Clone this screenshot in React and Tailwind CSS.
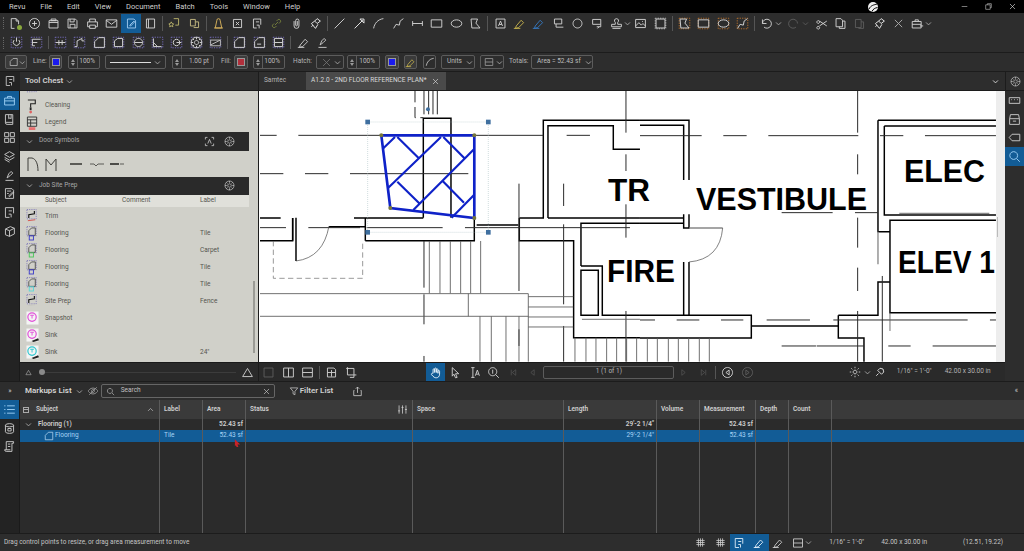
import React from "react";

const font = { fontFamily: "Roboto, 'Liberation Sans', sans-serif" };

// 16x16 toolbar glyphs
const P = {
  newDoc: "M4 2h6l3 3v4 M4 2v12h4 M10 2v3h3",
  plusCircle: "M8 1.8a6.2 6.2 0 1 0 .01 0z M8 5v6 M5 8h6",
  folder: "M2.5 4.5h11v9h-11z M2.5 6.8h11 M5 2.5h6v2H5z",
  save: "M2.5 2.5h9l2 2v9h-11z M5 2.5v3.5h5v-3.5 M5 13.5v-4.5h6v4.5",
  print: "M4.5 6V2.5h7V6 M2 6h12v6h-2.5 M4.5 12H2V6 M4.5 10h7v4h-7z",
  mail: "M1.5 3.5h13v9h-13z M1.5 4l6.5 5 6.5-5",
  markup: "M3 2.5h8l2 2v9H3z M6 10l5-5 1 1-5 5H6z",
  panel: "M3 2.5h10v11H3z M5.5 2.5v11",
  docStar: "M7 2h6v8H9 M3 8l1-2 1 2 2 .5-1.5 1.5.5 2-2-1-2 1 .5-2L1 8.5z",
  docStar2: "M3 3h6v8H3z M9 6h4v7H7",
  bell: "M4 13.5 6 4a2 2 0 0 1 4 0l2 9.500z M2.500 13.500h11",
  snap: "M3 3h10v10H3z M6 6l4 4 M10 6 6 10",
  docArrow: "M3 2.500h9v7 M3 2.500v11h4 M10 14v-4h-3 M6 6h4",
  link: "M6 10l4-4 M5 8l-2 2a2.400 2.400 0 0 0 3 3l2-2 M8 5l2-2a2.400 2.400 0 0 1 3 3l-2 2",
  clip: "M5 5v6a3 3 0 0 0 6 0V4.500a2 2 0 0 0-4 0V10a1 1 0 0 0 2 0V5",
  brush: "M10 2l4 3-4 3-3-3z M7 5 3 8l5 6 3-5 M5 10l-2 2",
  line: "M2 14 14 2",
  arrow: "M2 14 12 4 M8.500 2.500H13.500V7.500z",
  arc: "M2 14C3 8 7 3 14 2",
  poly: "M2 14l3-5 4 1 1-5 4-3",
  measure: "M2 8h12 M2 5v6 M14 5v6",
  rect: "M1.500 3.500h13v9h-13z",
  ellipse: "M8 3.500c3.600 0 6.500 2 6.500 4.500S11.600 12.500 8 12.500 1.500 10.500 1.500 8 4.400 3.500 8 3.500z",
  polygon: "M2.500 2.500h8l-2 5 5 6h-10z",
  text: "M2.500 2.500h11v11h-11z M5.500 11 8 5l2.500 6 M6.500 9.200h3",
  hl: "M3 14l1-3 6-7 3 3-6 6z M1 14h8",
  callout: "M3 2.500h9v6H3z M5 8.500v4h9 ",
  cloud: "M8 2.500a5.500 5.500 0 1 0 .01 0z",
  calloutArr: "M2 3h10v6H2z M12 9v3h-5 M10 12l-2 2",
  stamp: "M8 2a2.500 2.500 0 0 1 1.500 4.500V9H14v3H2V9h4.500V6.500A2.500 2.500 0 0 1 8 2z M3 14h10",
  image: "M2 3h12v10H2z M2 11l4-4 3 3 2-2 3 3 M10 5.500h1",
  undo: "M3 8a5.500 5.500 0 1 1 2 4.500 M3 3v5h5",
  redo: "M13 8a5.500 5.500 0 1 0-2 4.500",
  scissors: "M4 4.500a1.700 1.700 0 1 0 .01 0z M4 11.500a1.700 1.700 0 1 0 .01 0z M5.500 5l9 6 M5.500 11l9-6",
  copy: "M2.500 2h6l2 2v8h-8z M10.500 5h3v9h-7v-2",
  paste: "M3 3h7v10H3z M10 6h3v8H7v-1",
  close: "M3.500 3.500l9 9 M12.500 3.500l-9 9",
  toolbox: "M1.500 5.500h11v8h-11z M5 5.500v-2h4v2 M1.500 9h11 M11 11h4",
  hand: "M5 9V4.500a1 1 0 0 1 2 0V8V3.500a1 1 0 0 1 2 0V8V4.500a1 1 0 0 1 2 0V9V6.500a1 1 0 0 1 2 0V10c0 3-2 4.500-4 4.500S6 14 3 10.500c-.5-1 1-2 2-1.500z",
  cursor: "M4 2l8 7.500H8l2 4.500-2 .5-2-4.500-2 2.500z",
  textSel: "M4 2h4 M6 2v12 M4 14h4 M9 12l2.500-7 2.500 7 M10 10h3",
  zoom: "M7 2a5 5 0 1 0 .01 0z M10.500 10.500l4 4 M7 4.500v5",
  first: "M4 3v10 M12 3 6 8l6 5z",
  prev: "M11 3 5 8l6 5z",
  next: "M5 3l6 5-6 5z",
  last: "M12 3v10 M4 3l6 5-6 5z",
  back: "M8 1.800a6.200 6.200 0 1 0 .01 0z M10 5 6 8l4 3z",
  forward: "M8 1.800a6.200 6.200 0 1 0 .01 0z M6 5l4 3-4 3z",
  split1: "M2 2.500h12v11H2z M8 2.500v11",
  split2: "M2 2.500h12v11H2z M2 8h12",
  single: "M2.500 2.500h11v11h-11z",
  compare: "M3 2.500h8l2 2v9H3z M3 8h10 M8 5v8",
  overlay: "M3 3h8v8H3z M3 1.500v3 M1.500 3h3 M11 11v3 M14 11h-3 M6 14h5",
  sun: "M8 5.500a2.500 2.500 0 1 0 .01 0z M8 1v2 M8 13v2 M1 8h2 M13 8h2 M3 3l1.500 1.500 M11.500 11.500 13 13 M13 3l-1.500 1.500 M4.500 11.500 3 13",
  calib: "M3 13l3-3 M5 6l5 5 3-3-1-4-4-1z",
  search: "M7 2.500a4.500 4.500 0 1 0 .01 0z M10.500 10.500l4 4",
  filter: "M2 3h12L9.500 8.500V14l-3-1.500v-4z",
  share: "M3.500 6.500h-1v7.500h11V6.500h-1 M8 10V1.500 M5.500 4 8 1.500 10.500 4",
  eyeOff: "M1.500 8S4 4 8 4s6.500 4 6.500 4-2.500 4-6.500 4-6.500-4-6.500-4z M3 13 13 3 M8 6a2 2 0 1 0 .01 0z",
  toolChest: "M2 5h12v8.500H2z M5.500 5V3h5v2 M2 8.500h12",
  book: "M3 2h9v12H5a2 2 0 0 1-2-2z M3 11.500h9 M7 2v5l1.500-1L10 7V2",
  grid: "M2 2h5v5H2z M9 2h5v5H9z M2 9h5v5H2z M9 9h5v5H9z",
  layers: "M8 2l6 3.500L8 9 2 5.500z M2 9l6 3.500L14 9 M2 11.500 8 15",
  stampPen: "M3 14h10 M5 11l2-5 3-3 2 2-3 3-4 3z",
  markups: "M3 2h8l2 2v10H3z M5 5h5 M5 8h2 M7 11l5-5 1 1-5 5z",
  docLink: "M3 2h10v7 M3 2v12h5 M7 6h4 M10 14v-4H7",
  cube: "M3 5l6-3 5 2v7l-6 3-5-2z M3 5l5 2 6-3 M8 7v7",
  gear: "M8 5.500a2.500 2.500 0 1 0 .01 0z M8 1.500a6.500 6.500 0 1 0 .01 0z M8 1.500v2.500 M8 12v2.500 M1.500 8H4 M12 8h2.500 M3.500 3.500l1.500 1.500 M11 11l1.500 1.500 M12.500 3.500 11 5 M5 11l-1.500 1.500",
  list: "M5 3.500h9.500 M5 8h9.500 M5 12.500h9.500 M1.500 3.500h1.500 M1.500 8h1.500 M1.500 12.500h1.500",
  sliders: "M3 2v12 M8 2v12 M13 2v12 M1.500 10h3 M6.500 5h3 M11.500 8h3",
  docCube: "M3 4a5 2 0 0 1 10 0v8a5 2 0 0 1-10 0z M3 4a5 2 0 0 0 10 0 M6 8h4v3H6z",
  scroll: "M4 2h9v2H11v10H4a2 2 0 0 1-2-2h7 M4 12V2 M6 5h3 M6 8h3",
  keyboard: "M1.500 4.500h13v7h-13z M4 7h1 M7.500 7h1 M11 7h1",
  drawer: "M2 7l1-5h10l1 5v7H2z M2 7h12 M6 10h4",
  tag: "M14.500 4v8H5L1.500 8 5 4z",
  magnifier: "M7 2a4.800 4.800 0 1 0 .01 0z M10.500 10.500l4 4",
  grid2: "M2 5h12 M2 8h12 M2 11h12 M5 2v12 M8 2v12 M11 2v12",
  flooring: "M2 14V7l5-5h7v12z",
};

function Ic({ d, c = "#d2d2d2", size = 13, sw = 1.15, dim = false }) {
  return (
    <svg viewBox="0 0 16 16" width={size} height={size} fill="none" stroke={dim ? "#5c5c5c" : c} strokeWidth={sw}>
      <path d={d} />
    </svg>
  );
}

function Chev({ c = "#a8a8a8", size = 7 }) {
  return (
    <svg viewBox="0 0 10 10" width={size} height={size} fill="none" stroke={c} strokeWidth="1.3">
      <path d="M1.500 3.500 5 7l3.500-3.500" />
    </svg>
  );
}

// measurement style tool: dotted corners round a shape
function Dotted({ d, c = "#7a72c8", s = "#d2d2d2" }) {
  return (
    <svg viewBox="0 0 16 16" width="13" height="13" fill="none">
      <rect x="1.500" y="1.500" width="13" height="13" stroke={c} strokeWidth="1.100" strokeDasharray="1.500 1.500" />
      <path d={d} stroke={s} strokeWidth="1.200" />
    </svg>
  );
}

function Slot({ children, active }) {
  return (
    <div className={`w-[19.4px] h-[19px] flex items-center justify-center shrink-0 ${active ? "bg-[#125c96]" : ""}`}>
      {children}
    </div>
  );
}

function Sep({ tall }) {
  return (
    <div className="w-[5px] flex justify-center shrink-0">
      <div className={`w-px bg-[#555] ${tall ? "h-[15px]" : "h-[13px]"}`} />
    </div>
  );
}

function Grip() {
  return <div className="h-[12px] w-px border-l border-dotted border-[#666] shrink-0" />;
}

const O = "#c5762c";

function Toolbar1() {
  const a = [
    { d: P.newDoc, dot: true }, { d: P.plusCircle }, { d: P.folder }, { d: P.save }, { d: P.print }, { d: P.mail },
    { d: P.markup, active: true, c: "#9cc8ee" }, { d: P.panel }, "|",
    { d: P.docStar, c: "#b9b26a" }, { d: P.docStar2, c: "#c4b982" }, "|",
    { d: P.bell, c: "#d8b35c" }, { d: P.snap }, { d: P.docArrow }, { d: P.link, c: "#76803c" }, { d: P.clip }, { d: P.brush, c: "#eeeeee" }, "|",
    { d: P.line }, { d: P.arrow, c: "#eeeeee" }, { d: P.arc }, { d: P.poly }, { d: P.measure }, { d: P.rect }, { d: P.ellipse }, { d: P.polygon }, "|",
    { d: P.text }, { d: P.hl, c: "#c4b04c" }, { d: P.hl, c: "#3478c0" }, { d: P.callout }, { d: P.cloud }, { d: P.calloutArr },
  ];
  const b = [
    { d: P.image }, { dotted: P.single }, "|",
    { d: P.polygon, o: true }, { d: P.rect, o: true }, { d: P.ellipse, o: true }, { d: P.poly, o: true }, "|",
  ];
  const c = [
    { d: P.scissors }, { d: P.copy }, { d: P.paste, dim: true }, { d: P.brush, c: "#eeeeee" }, { d: P.close, c: "#aaaaaa" },
  ];
  const render = (it, i) => {
    if (it === "|") return <Sep key={i} tall />;
    return (
      <Slot key={i} active={it.active}>
        {it.o ? (
          <Dotted d={it.d} c={O} />
        ) : it.dotted ? (
          <Dotted d={it.dotted} c="#c9c9c9" />
        ) : (
          <div className="relative flex">
            <Ic d={it.d} c={it.c} dim={it.dim} />
            {it.dot && <div className="absolute right-[-1px] bottom-0 w-[5px] h-[5px] rounded-full bg-[#8aa83c]" />}
          </div>
        )}
      </Slot>
    );
  };
  return (
    <div className="h-[20px] pl-[3px] flex items-center">
      <Grip />
      <div className="w-px shrink-0" />
      {a.map(render)}
      <div className="w-[24.4px] flex items-center shrink-0 pl-[3px] gap-px">
        <Ic d={P.stamp} />
        <Chev />
      </div>
      {b.map(render)}
      <div className="w-[27px] flex items-center shrink-0 pl-[3px] gap-[2px]">
        <Ic d={P.undo} />
        <Chev />
      </div>
      <div className="w-[27px] flex items-center shrink-0 pl-[3px] gap-[2px]">
        <Ic d={P.redo} dim />
        <Chev c="#5c5c5c" />
      </div>
      {c.map(render)}
      <div className="flex items-center shrink-0 pl-[3px] gap-px">
        <Ic d={P.toolbox} />
        <Chev />
      </div>
    </div>
  );
}

function Toolbar2() {
  const a = [
    { d: "M5 5a4 4 0 1 0 6 0 M8 2v5" }, { d: "M3 4h10 M3 8h6 M3 12h3 M3 4v8" }, "|",
    { d: "M2 8h12 M6 5v6 M10 5v6" }, { d: "M2 13h3V6l6-3v3 h3" }, { d: P.flooring }, { d: "M3 13V6l4-3h6v10z" },
    { d: "M8 3a5 5 0 1 0 .01 0z M3 8h10" }, { d: "M3 3v10h10 M3 8l5 5" }, { d: "M8 4a4 4 0 1 0 .01 0z M8 8h6" }, { d: P.gear }, { d: "M2 11 14 5 M2 5h12v7H2z", s: "#bbbbbb" }, "|",
    { d: P.flooring }, { d: "M2 14V7l5-5h7v12z M5 10h5" }, { d: "M3 3h10v10H3z M3 8h10" }, "|",
  ];
  return (
    <div className="h-[19px] pl-[3px] flex items-center">
      <Grip />
      <div className="w-[3px] shrink-0" />
      {a.map((it, i) =>
        it === "|" ? (
          <Sep key={i} />
        ) : (
          <Slot key={i}>
            <Dotted d={it.d} s={it.s} />
          </Slot>
        )
      )}
      <Slot><Ic d={P.hl} c="#c9c9c9" /></Slot>
      <Slot><Ic d={P.stampPen} c="#c9c9c9" /></Slot>
    </div>
  );
}

function Box({ className = "", children }) {
  return (
    <div className={`h-[14px] border border-[#5c5c5c] rounded-[2px] flex items-center shrink-0 text-[#bdbdbd] ${className}`}>
      {children}
    </div>
  );
}

function Spinner({ className, value }) {
  return (
    <Box className={className}>
      <div className="w-[9px] h-full border-r border-[#5c5c5c] flex flex-col items-center justify-center gap-px">
        <div className="w-0 h-0 border-x-[2.500px] border-x-transparent border-b-[3px] border-b-[#9a9a9a]" />
        <div className="w-0 h-0 border-x-[2.500px] border-x-transparent border-t-[3px] border-t-[#9a9a9a]" />
      </div>
      <span className="flex-1 text-right pr-[4px]">{value}</span>
    </Box>
  );
}

function Swatch({ inner, className = "" }) {
  return (
    <Box className={`justify-center bg-[#3c3c3c] ${className}`}>
      <div className={`w-[8px] h-[8px] border border-[#999] ${inner}`} />
    </Box>
  );
}

function Toolbar3() {
  return (
    <div className="h-[20px] border-y border-[#1c1c1c] flex items-center pl-[5px] text-[6.500px]">
      <Box className="w-[22px] pl-[3px] gap-px bg-[#3a3a3a]">
        <Ic d={P.flooring} size={10} />
        <Chev />
      </Box>
      <span className="ml-[6px] w-[16px] text-[#b5b5b5]">Line:</span>
      <Swatch inner="bg-[#1a1aee]" className="w-[13px]" />
      <Spinner className="w-[32px] ml-[6px]" value="100%" />
      <Box className="w-[61px] ml-[5px] px-[4px] gap-[3px]">
        <div className="flex-1 h-px bg-[#ddd]" />
        <Chev />
      </Box>
      <Spinner className="w-[42px] ml-[6px]" value="1.00 pt" />
      <span className="ml-[7px] w-[13px] text-[#b5b5b5]">Fill:</span>
      <Swatch inner="bg-[#b2303c]" className="w-[14px]" />
      <Spinner className="w-[32px] ml-[5px]" value="100%" />
      <span className="ml-[8px] w-[23px] text-[#b5b5b5]">Hatch:</span>
      <Box className="w-[28px] pl-[4px] gap-[2px]">
        <Ic d="M3 3l10 10 M13 3 3 13" c="#777" size={11} />
        <Chev />
      </Box>
      <Spinner className="w-[33px] ml-[3px]" value="100%" />
      <Swatch inner="bg-[#1a1aee]" className="w-[14px] ml-[5px]" />
      <Box className="w-[13px] ml-[5px] justify-center bg-[#3a3a3a]">
        <Ic d={P.hl} c="#c4b04c" size={11} />
      </Box>
      <Box className="w-[13px] ml-[6px] justify-center">
        <Ic d={P.arc} c="#ddd" size={10} />
      </Box>
      <Box className="w-[34px] ml-[5px] pl-[5px] gap-[4px]">
        <span>Units</span>
        <Chev />
      </Box>
      <Box className="w-[24px] ml-[5px] pl-[3px] gap-[2px]">
        <Ic d={P.split2} size={10} c="#aaa" />
        <Chev />
      </Box>
      <span className="ml-[5px] w-[22px] text-[#b5b5b5]">Totals:</span>
      <Box className="w-[62px] pl-[5px] gap-[4px] whitespace-nowrap">
        <span>Area = 52.43 sf</span>
        <Chev />
      </Box>
    </div>
  );
}

function RailBtn({ d, active }) {
  return (
    <div className={`h-[18.700px] flex items-center justify-center ${active ? "bg-[#125c96]" : ""}`}>
      <Ic d={d} c={active ? "#9cd0f5" : "#c9c9c9"} size={13} />
    </div>
  );
}

function LeftRail() {
  return (
    <div className="w-[20px] shrink-0 bg-[#232323] border-r border-[#1a1a1a]">
      {[P.toolChest, P.book, P.grid, P.layers, P.stampPen, P.markups, P.docLink, P.cube].map((d, i) => (
        <RailBtn key={i} d={d} active={i === 0} />
      ))}
    </div>
  );
}

function RightRail() {
  return (
    <div className="w-[19px] shrink-0 bg-[#2d2d2d]">
      {[P.keyboard, P.drawer, P.tag, P.magnifier].map((d, i) => (
        <RailBtn key={i} d={d} active={i === 3} />
      ))}
    </div>
  );
}

function FloorIcon({ c }) {
  return (
    <svg viewBox="0 0 14 16" width="13" height="15" fill="none">
      <rect x="1" y="0.500" width="10" height="10" stroke="#7a72b8" strokeWidth="0.900" strokeDasharray="1.200 1.200" />
      <path d="M3 10V5l3-3h4v8z" stroke="#444" strokeWidth="0.900" />
      <rect x="3.500" y="10.500" width="4.500" height="4.500" stroke={c} strokeWidth="1" />
    </svg>
  );
}

function TrimIcon({ c }) {
  return (
    <svg viewBox="0 0 14 16" width="13" height="15" fill="none">
      <rect x="1" y="0.500" width="10" height="10" stroke="#7a72b8" strokeWidth="0.900" strokeDasharray="1.200 1.200" />
      <path d="M3 9.500 3 6 9 5 9 2" stroke="#111" strokeWidth="1.200" />
      <path d="M2 12.500 10 11.500" stroke={c} strokeWidth="1" />
    </svg>
  );
}

function RoundIcon({ c, extra }) {
  return (
    <svg viewBox="0 0 14 16" width="13" height="15" fill="none">
      <rect x="0.500" y="0.500" width="13" height="14" fill="#f4f4f4" />
      <circle cx="6.500" cy="6.500" r="4.500" stroke={c} strokeWidth="1.300" />
      <path d="M4.500 4.500h4 M6.500 4.500v3.500" stroke={c} strokeWidth="1" />
      {extra && <path d="M6 14l7-3 1 2-6 2z" fill="#222" />}
    </svg>
  );
}

const chestRows = [
  { name: "Trim", icon: <TrimIcon c="#d8504a" /> },
  { name: "Flooring", label: "Tile", icon: <FloorIcon c="#3b3bc8" /> },
  { name: "Flooring", label: "Carpet", icon: <FloorIcon c="#4ac85a" /> },
  { name: "Flooring", label: "Tile", icon: <FloorIcon c="#3b3bc8" /> },
  { name: "Flooring", label: "Tile", icon: <FloorIcon c="#5ad8d8" /> },
  { name: "Site Prep", label: "Fence", icon: <TrimIcon c="#c8c8c0" /> },
  { name: "Snapshot", icon: <RoundIcon c="#e050d8" /> },
  { name: "Sink", icon: <RoundIcon c="#e050d8" extra /> },
  { name: "Sink", label: "24\"", icon: <RoundIcon c="#30c8d0" extra /> },
];

function ChestRow({ icon, name, comment, label }) {
  return (
    <div className="h-[17px] grid grid-cols-[25px_77px_78px_1fr] items-center text-[6.500px] text-[#55554f]">
      <div className="pl-[6px] flex">{icon}</div>
      <span>{name}</span>
      <span>{comment}</span>
      <span>{label}</span>
    </div>
  );
}

function ChestHeader({ title, tall, children }) {
  return (
    <div className={`flex items-center bg-[#2a2a2a] text-[#a8a8a8] text-[6.500px] pl-[6px] pr-[14px] ${tall ? "h-[19px]" : "h-[18px]"}`}>
      <Chev size={7} />
      <span className="ml-[6px] flex-1">{title}</span>
      {children}
    </div>
  );
}

function ToolChest() {
  return (
    <div className="w-[238px] shrink-0 flex flex-col">
      <div className="flex-1 flex overflow-hidden bg-[#d0d0c9]">
        <div className="w-[229px] -mt-[10.500px]">
          <ChestRow name="" label="connection" icon={<TrimIcon c="#d0d0c9" />} />
          <ChestRow
            name="Cleaning"
            icon={<svg viewBox="0 0 14 16" width="13" height="15" fill="none"><path d="M2 1h8v4H5v4" stroke="#222" strokeWidth="1.200" /><path d="M5 9v3" stroke="#222" strokeWidth="2" /><circle cx="5" cy="14" r="1.500" fill="#e06060" /></svg>}
          />
          <ChestRow
            name="Legend"
            icon={<svg viewBox="0 0 14 16" width="13" height="15" fill="none"><path d="M1.500 1h10v10h-10z M1.500 4h10 M1.500 7.500h10 M5 4v7" stroke="#333" strokeWidth="1" /><rect x="3" y="12" width="7" height="3" fill="#e87070" /></svg>}
          />
          <ChestHeader title="Door Symbols" tall>
            <div className="mr-[9px]"><Ic d="M2 5V2h3 M11 2h3v3 M14 11v3h-3 M5 14H2v-3 M5.500 11 8 5l2.500 6" c="#d0d0d0" size={11} /></div>
            <Ic d={P.gear} c="#d0d0d0" size={11} sw={1} />
          </ChestHeader>
          <div className="h-[26px] flex items-center pl-[6px]">
            <svg viewBox="0 0 110 16" width="110" height="16" fill="none" stroke="#3e3e3a">
              <path d="M2 15V2H6C10 3 12 8 12 15" strokeWidth="1" />
              <path d="M20 15V3L25 9 30 3V15" strokeWidth="1" />
              <path d="M44 8h12" strokeWidth="1.600" />
              <path d="M64 8h4l2 2 2-2h6" strokeWidth="0.800" />
              <path d="M84 8h9" strokeWidth="1.800" />
              <path d="M94 8h4" strokeWidth="0.800" />
            </svg>
          </div>
          <ChestHeader title="Job Site Prep">
            <Ic d={P.gear} c="#d0d0d0" size={11} sw={1} />
          </ChestHeader>
          <div className="h-[12px] grid grid-cols-[25px_77px_78px_1fr] items-center text-[6.500px] text-[#55554f] bg-[#e0e0da]">
            <span />
            <span>Subject</span>
            <span>Comment</span>
            <span>Label</span>
          </div>
          <div className="pt-[1.500px]">
            {chestRows.map((r, i) => (
              <ChestRow key={i} {...r} />
            ))}
          </div>
        </div>
        <div className="flex-1 pt-[190px] pl-[4px]">
          <div className="w-[2px] h-[72px] bg-[#9a9a94]" />
        </div>
      </div>
      <div className="h-[19px] bg-[#2a2a2a] flex items-center pl-[5px] pr-[4px] border-t border-[#1a1a1a]">
        <Ic d="M8 3 14 13H2z" c="#c9c9c9" size={7} />
        <div className="ml-[7px] w-[6px] h-[6px] rounded-full bg-[#8a8a8a] shrink-0" />
        <div className="flex-1 h-px bg-[#3c3c3c]" />
        <div className="ml-[5px]"><Ic d="M8 3 14 13H2z" c="#c9c9c9" size={13} /></div>
      </div>
    </div>
  );
}

function Plan() {
  const m = "#000";
  return (
    <svg viewBox="259 90 737 271" className="flex-1 min-w-0 h-full bg-white" fill="none">
      <g transform="translate(260 90) scale(0.3333)" stroke={m}>
        <g strokeWidth="4.400">
          <path d="M490 380V82H573V380" />
          <path d="M0 381H62 M282 381H316 M0 449H98V381 M316 449V381H490 M316 449H643V381" />
          <path d="M778 381V449H941V740H1140 M778 381H850V88H1140 M864 381V104H1060V175H1140 M864 381H1140" />
          <path d="M963 525V397H1140 M963 525H1027V673H1140 M963 538H1015V673H963z" />
          <path d="M108 380V510 M98 381V449" />
          <path d="M207 407H316 M650 402H775" />
        </g>
        <g strokeWidth="3" stroke="#2a2a2a">
          <path d="M0 133H50 M115 133H365 M643 133H850 M920 133H990 M0 248H70 M135 248H205 M270 248H625" />
          <path d="M0 410H78 M145 410H300 M320 410H548 M615 410H1110" />
          <path d="M492 0V70 M492 450V590 M492 610V700 M492 795V812 M506 0V70 M519 0V70 M532 0V70" />
          <path d="M465 0V80H490" strokeDasharray="34 14" />
          <path d="M1098 0V125 M1098 190V240 M1098 340V440 M1098 660V812" />
          <path d="M777 278V600 M777 715V765 M911 278V345 M911 400V640 M911 705V812" />
        </g>
        <g strokeWidth="2.600" stroke="#5a5a5a">
          <path d="M508 450V607 M540 450V607 M571 450V607 M602 450V607 M632 450V607 M662 450V607" />
          <path d="M0 608H805 M0 676H805 M625 608V676 M805 608V812 M805 617H940 M805 648H940 M805 678H940 M805 708H940" />
          <path d="M660 676V812 M694 676V812 M738 676V812 M777 676V812" />
          <path d="M945 740V812 M978 740V812 M1008 740V812 M1040 740V812 M1070 740V812 M1100 740V812 M1130 740V812" />
          <path d="M966 685H1140" />
        </g>
        <path d="M108 510Q190 500 207 405" stroke="#444" strokeWidth="2" />
        <path d="M40 450V562H308V450" stroke="#666" strokeWidth="2" strokeDasharray="16 10" />

        <rect x="323" y="93" width="362" height="331" stroke="#9ab4b8" strokeWidth="2" strokeDasharray="2 4" />
        <path d="M364 133H643V381L391 351z" stroke="#0f22c8" strokeWidth="8" />
        <path
          d="M370 172 405 138 M412 138 475 200 M385 290 543 138 M550 138 612 200 M460 357 642 175 M412 272 477 336 M548 270 612 335 M575 380 642 312"
          stroke="#0f22c8"
          strokeWidth="6.500"
        />
        <g fill="#3f6f9f" stroke="none">
          <rect x="316" y="86" width="14" height="14" />
          <rect x="678" y="86" width="14" height="14" />
          <rect x="316" y="417" width="14" height="14" />
          <rect x="678" y="417" width="14" height="14" />
          <circle cx="504" cy="55" r="6" />
        </g>
        <g fill="#77773a" stroke="none">
          <circle cx="364" cy="133" r="6" />
          <circle cx="643" cy="133" r="6" />
          <circle cx="643" cy="381" r="6" />
          <circle cx="391" cy="351" r="6" />
        </g>
      </g>
      <g transform="translate(640 90) scale(0.3333)" stroke={m}>
        <g strokeWidth="4.400">
          <path d="M0 88H147V267 M0 103H131V267 M0 381H131 M0 397H131 M131 370V411H147V370" />
          <path d="M131 513V673 M147 513V673 M0 673H334V741H0 M334 705H595 M595 673V741H672V812 M595 673H714V573H750" />
          <path d="M714 88V422H750V388H1068 M714 88H1068 M733 105V372H1068 M733 105H1068 M750 388V665H1068" />
        </g>
        <g strokeWidth="3" stroke="#2a2a2a">
          <path d="M0 134H185 M250 134H320 M385 134H655 M720 134H790 M855 134H1068" />
          <path d="M653 0V125 M653 190V250 M653 380V470 M653 530V600 M653 660V812 M727 555V812" />
          <path d="M425 365H578 M645 365H714 M0 687H45 M110 687H178 M243 687H310 M380 687H510 M580 687H983 M1050 687H1068" />
          <path d="M425 765H528 M530 765H672 M745 765H812 M878 765H1068" />
        </g>
        <path d="M148 411H248 M778 367H1048 M714 422V520" stroke="#888" strokeWidth="4" />
        <path d="M248 411Q240 505 147 513" stroke="#444" strokeWidth="2" />
        <path d="M750 665V720 M22 741V812 M52 741V812 M85 741V812 M115 741V812 M146 741V812 M178 741V812 M208 741V812" stroke="#5a5a5a" strokeWidth="2.600" />
      </g>
      <g fill="#000" fontWeight="700" fontSize="31" style={{ fontFamily: "'Liberation Sans', Arial, sans-serif" }}>
        <text x="608" y="200" textLength="42" lengthAdjust="spacingAndGlyphs">TR</text>
        <text x="696" y="209" textLength="171" lengthAdjust="spacingAndGlyphs">VESTIBULE</text>
        <text x="904" y="181" textLength="81" lengthAdjust="spacingAndGlyphs">ELEC</text>
        <text x="607" y="281" textLength="68" lengthAdjust="spacingAndGlyphs">FIRE</text>
        <text x="898" y="272" textLength="97" lengthAdjust="spacingAndGlyphs">ELEV 1</text>
      </g>
    </svg>
  );
}

function BarIcon({ d, active, dim, size = 13 }) {
  return (
    <div className={`w-[19.400px] h-full flex items-center justify-center shrink-0 ${active ? "bg-[#125c96]" : ""}`}>
      <Ic d={d} dim={dim} c={active ? "#e6f2fb" : "#cfcfcf"} size={size} />
    </div>
  );
}

function CanvasBar() {
  return (
    <div className="h-[19px] bg-[#2a2a2a] flex items-center text-[6.500px] text-[#b5b5b5] border-t border-[#1a1a1a]">
      <BarIcon d={P.single} dim />
      <BarIcon d={P.split1} />
      <BarIcon d={P.split2} />
      <Sep />
      <BarIcon d={P.compare} />
      <BarIcon d={P.overlay} />
      <div className="w-[65px] shrink-0" />
      <BarIcon d={P.hand} active />
      <BarIcon d={P.cursor} />
      <BarIcon d={P.textSel} />
      <BarIcon d={P.zoom} />
      <BarIcon d={P.first} dim size={9} />
      <BarIcon d={P.prev} dim size={9} />
      <div className="w-[131px] h-[13px] ml-px border border-[#5c5c5c] rounded-[2px] flex items-center justify-center shrink-0">
        1 (1 of 1)
      </div>
      <BarIcon d={P.next} dim size={9} />
      <BarIcon d={P.last} dim size={9} />
      <Sep />
      <BarIcon d={P.back} />
      <BarIcon d={P.forward} dim />
      <div className="w-[92px] shrink-0" />
      <Ic d={P.sun} c="#cfcfcf" size={12} />
      <div className="ml-[3px]"><Chev /></div>
      <div className="ml-[3px]"><Ic d={P.calib} c="#eeeeee" size={12} /></div>
      <span className="ml-[11px] whitespace-nowrap">1/16" = 1'-0"</span>
      <span className="ml-[13px] whitespace-nowrap">42.00 x 30.00 in</span>
    </div>
  );
}

const colClass =
  "grid grid-cols-[140px_43px_43px_167px_151px_93px_43px_56px_33px_43px_1fr]";

function Cell({ children, className = "", last }) {
  return (
    <div className={`flex items-center px-[4px] whitespace-nowrap ${last ? "" : "border-r border-[#5a5a5a]"} ${className}`}>
      {children}
    </div>
  );
}

function MarkupsHeader() {
  return (
    <div className="h-[19px] flex items-center border-t border-[#1c1c1c] bg-[#2d2d2d]">
      <div className="w-[20px] text-center text-[7px] text-[#c9c9c9] shrink-0">»</div>
      <span className="ml-[5px] text-[8px] font-semibold text-[#d4d4d4]">Markups List</span>
      <div className="ml-[4px]"><Chev /></div>
      <div className="ml-[4px]"><Ic d={P.eyeOff} c="#9a9a9a" size={12} /></div>
      <div className="ml-[2px] w-[174px] h-[14px] border border-[#666] rounded-[2px] flex items-center pl-[4px] pr-[3px] text-[6.500px] text-[#c0c0c0]">
        <Ic d={P.search} c="#bbbbbb" size={9} />
        <span className="ml-[6px] flex-1">Search</span>
        <Ic d={P.close} c="#cfcfcf" size={9} />
      </div>
      <div className="ml-[14px]"><Ic d={P.filter} c="#cfcfcf" size={10} /></div>
      <span className="ml-[1px] text-[8px] font-semibold text-[#cfcfcf]">Filter List</span>
      <div className="ml-[19px]"><Ic d={P.share} c="#cfcfcf" size={11} /></div>
      <span className="ml-auto mr-[6px] text-[7px] text-[#c9c9c9]">«</span>
    </div>
  );
}

function MarkupsTable() {
  return (
    <div className="flex-1 min-w-0 flex flex-col text-[6.500px] font-semibold text-[#d0d0d0]">
      <div className={`${colClass} h-[19px] bg-[#3a3a3a]`}>
        <Cell>
          <div className="ml-[-1px] w-[6px] h-[6px] border border-[#aaa] flex items-center justify-center mr-[7px]">
            <div className="w-[4px] h-px bg-[#aaa]" />
          </div>
          <span className="flex-1">Subject</span>
          <svg viewBox="0 0 10 10" width="7" height="7" fill="none" stroke="#aaa" strokeWidth="1.200" className="mr-[1px]"><path d="M1.500 7 5 3.500 8.500 7" /></svg>
        </Cell>
        <Cell>Label</Cell>
        <Cell>Area</Cell>
        <Cell className="justify-between">
          Status
          <Ic d={P.sliders} c="#cfcfcf" size={11} />
        </Cell>
        <Cell>Space</Cell>
        <Cell>Length</Cell>
        <Cell>Volume</Cell>
        <Cell>Measurement</Cell>
        <Cell>Depth</Cell>
        <Cell>Count</Cell>
        <Cell last />
      </div>
      <div className={`${colClass} h-[11px] bg-[#2b2b2b]`}>
        <Cell className="pl-[5px]">
          <Chev />
          <span className="ml-[6px]">Flooring (1)</span>
        </Cell>
        <Cell />
        <Cell className="justify-end pr-[2px]">52.43 sf</Cell>
        <Cell />
        <Cell />
        <Cell className="justify-end pr-[2px]">29'-2 1/4"</Cell>
        <Cell />
        <Cell className="justify-end pr-[2px]">52.43 sf</Cell>
        <Cell />
        <Cell />
        <Cell last />
      </div>
      <div className={`${colClass} h-[12px] bg-[#125c96] text-[#a8d4f5] font-normal`}>
        <Cell className="pl-[24px]">
          <Ic d={P.flooring} c="#bcdcf5" size={10} />
          <span className="ml-px">Flooring</span>
        </Cell>
        <Cell className="px-[1px]">Tile</Cell>
        <Cell className="justify-end pr-[2px]">52.43 sf</Cell>
        <Cell />
        <Cell />
        <Cell className="justify-end pr-[2px]">29'-2 1/4"</Cell>
        <Cell />
        <Cell className="justify-end pr-[2px]">52.43 sf</Cell>
        <Cell />
        <Cell />
        <Cell last />
      </div>
      <div className={`${colClass} flex-1 bg-[#2b2b2b] relative`}>
        <Cell />
        <Cell />
        <Cell />
        <Cell />
        <Cell />
        <Cell />
        <Cell />
        <Cell />
        <Cell />
        <Cell />
        <Cell last />
        <svg viewBox="0 0 8 10" width="7" height="9" className="absolute left-[214px] top-[-3px]">
          <path d="M1 0 7 6H4L5 9 3 9 2 7 1 8z" fill="#c8232a" />
        </svg>
      </div>
    </div>
  );
}

function StatusBar() {
  return (
    <div className="h-[18px] bg-[#2d2d2d] flex items-center text-[6.500px] text-[#c4c4c4] border-t border-[#1c1c1c]">
      <span className="ml-[4px] w-[687px] shrink-0">Drag control points to resize, or drag area measurement to move</span>
      <BarIcon d={P.grid2} size={11} />
      <BarIcon d={P.grid2} size={11} />
      <BarIcon d={P.docLink} active size={12} />
      <BarIcon d={P.hl} active size={12} />
      <BarIcon d={P.hl} size={12} />
      <BarIcon d={P.split2} size={12} />
      <div className="ml-[-2px]"><Chev /></div>
      <span className="ml-[17px] whitespace-nowrap">1/16" = 1'-0"</span>
      <span className="ml-[17px] whitespace-nowrap">42.00 x 30.00 in</span>
      <span className="ml-[36px] whitespace-nowrap">(12.51, 19.22)</span>
    </div>
  );
}

export default function App() {
  return (
    <div className="w-[1024px] h-[551px] overflow-hidden flex flex-col bg-[#2d2d2d]" style={font}>
      {/* title and menu */}
      <div className="h-[13px] bg-black flex items-center text-[7.500px] text-[#cfcfcf] pl-[9px] gap-[15px] relative">
        {["Revu", "File", "Edit", "View", "Document", "Batch", "Tools", "Window", "Help"].map((m) => (
          <span key={m}>{m}</span>
        ))}
        <div className="absolute left-[868px] top-[2px]">
          <svg viewBox="0 0 10 10" width="10" height="10">
            <circle cx="5" cy="5" r="5" fill="#eee" />
            <path d="M1 7C3 3 6 3 9 2 M4 9.500C5 7 7 6 9.500 5.500" stroke="#000" strokeWidth="1" fill="none" />
          </svg>
        </div>
        <div className="ml-auto flex items-center gap-[15px] pr-[7px]">
          <Ic d="M3 8h10" c="#bbb" size={9} />
          <Ic d="M3 5h8v8H3z M6 5V3h7v7h-2" c="#bbb" size={9} />
          <Ic d={P.close} c="#ddd" size={9} />
        </div>
      </div>

      <Toolbar1 />
      <Toolbar2 />
      <Toolbar3 />

      {/* panel titles and tabs */}
      <div className="h-[19px] flex items-center text-[#cfcfcf] border-b border-[#1c1c1c]">
        <div className="w-[20px] h-full flex items-center justify-center bg-[#232323] shrink-0">
          <Ic d={P.docLink} c="#c9c9c9" size={12} />
        </div>
        <div className="w-[239px] flex items-center pl-[5px] shrink-0 border-r border-[#1c1c1c] h-full">
          <span className="text-[8px] font-semibold">Tool Chest</span>
          <div className="ml-[3px]"><Chev /></div>
        </div>
        <div className="w-[47px] h-full flex items-center pl-[5px] text-[6.500px] text-[#b5b5b5] bg-[#303030]">Samtec</div>
        <div className="w-[140px] h-full flex items-center pl-[5px] pr-[6px] text-[6.500px] text-[#d8d8d8] bg-[#4a4a4a] whitespace-nowrap">
          <span className="flex-1">A1.2.0 - 2ND FLOOR REFERENCE PLAN*</span>
          <Ic d={P.close} c="#ddd" size={9} />
        </div>
        <div className="flex-1 flex justify-end pr-[6px]"><Chev c="#ddd" /></div>
        <div className="w-[19px] h-full flex items-center justify-center border-l border-[#1c1c1c]">
          <Ic d={P.gear} c="#c9c9c9" size={11} sw={1} />
        </div>
      </div>

      {/* work area */}
      <div className="h-[290px] flex shrink-0">
        <LeftRail />
        <ToolChest />
        <div className="flex-1 min-w-0 flex flex-col border-l border-[#1c1c1c]">
          <div className="h-[271px] flex">
            <Plan />
            <div className="w-[9px] shrink-0 bg-[#ededed] flex items-center">
              <div className="w-px h-[20px] bg-[#bbb] ml-[1px]" />
            </div>
          </div>
          <CanvasBar />
        </div>
        <RightRail />
      </div>

      <MarkupsHeader />
      <div className="flex-1 min-h-0 flex">
        <div className="w-[20px] shrink-0 bg-[#232323] border-r border-[#1a1a1a]">
          <RailBtn d={P.list} active />
          <RailBtn d={P.docCube} />
          <RailBtn d={P.scroll} />
        </div>
        <MarkupsTable />
      </div>
      <StatusBar />
    </div>
  );
}
